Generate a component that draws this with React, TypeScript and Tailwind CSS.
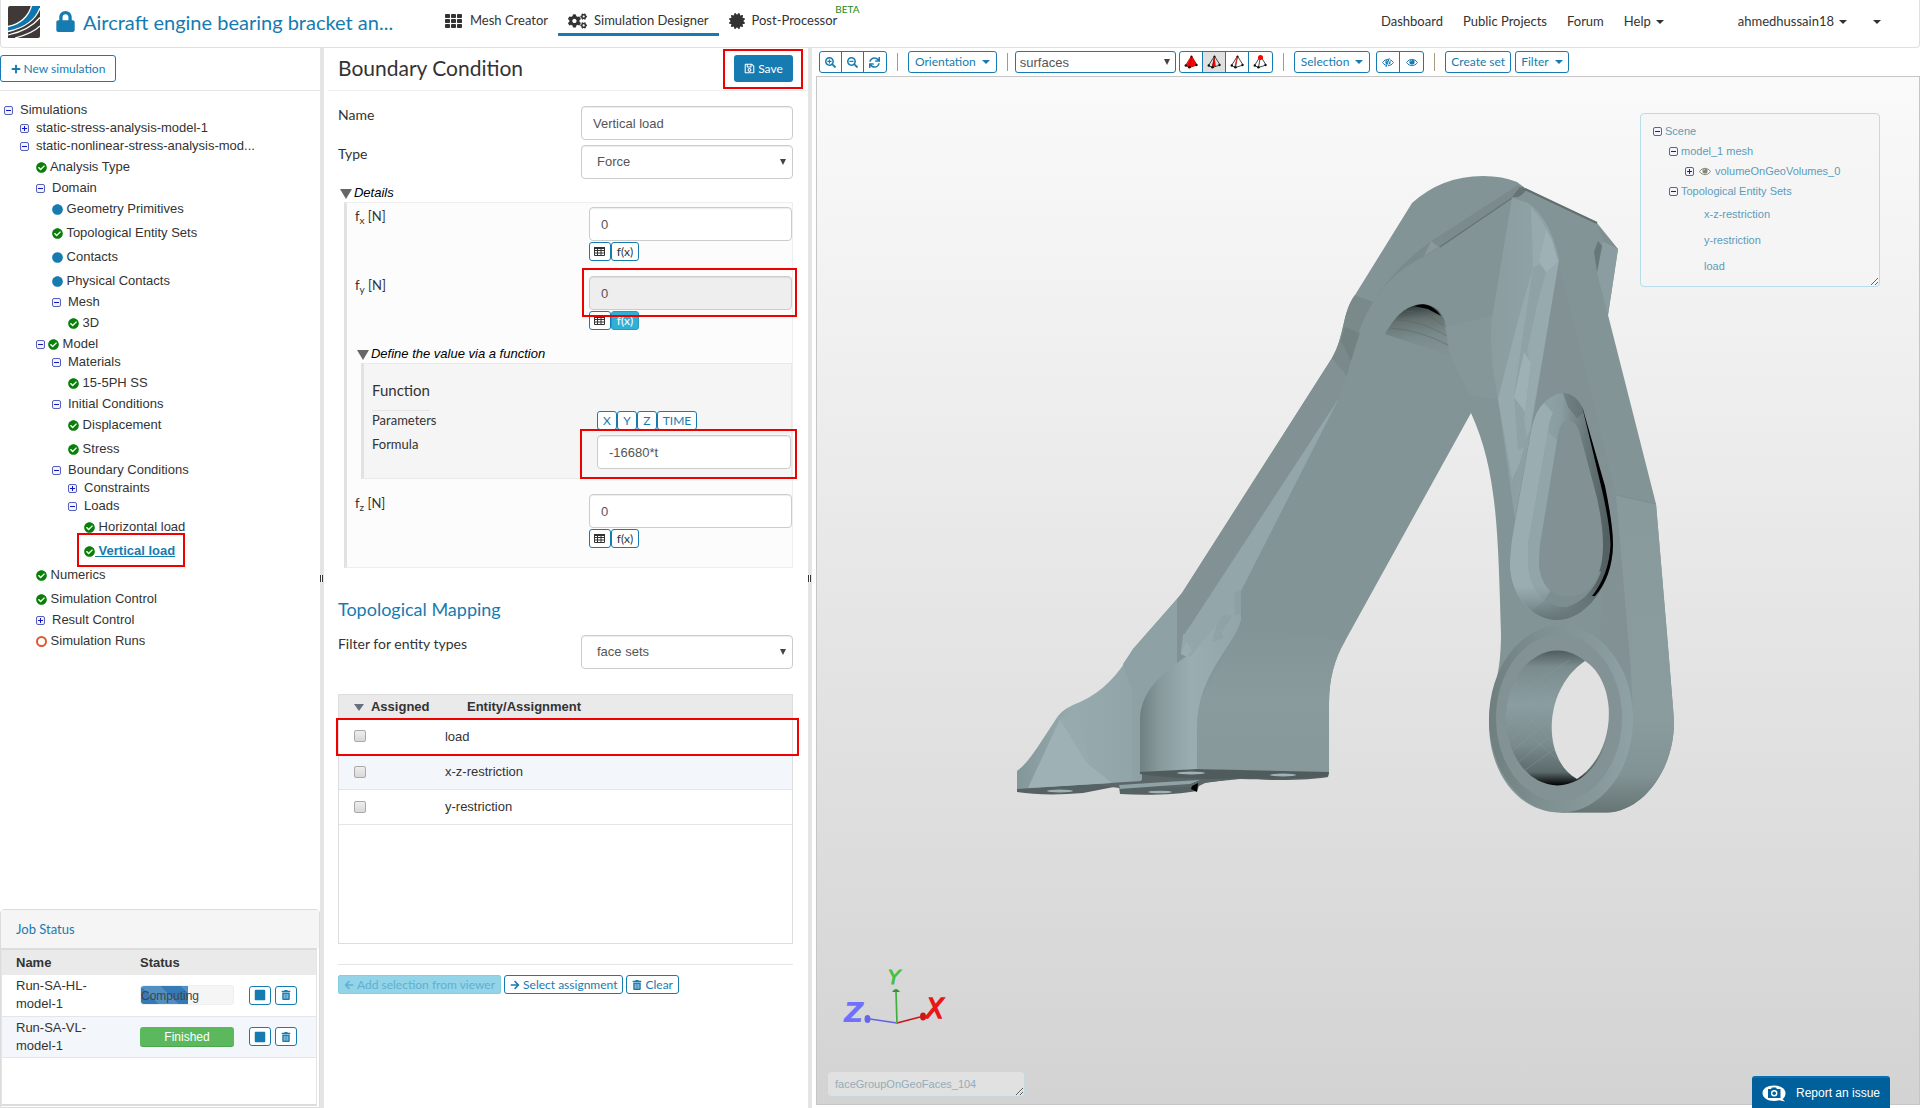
import React from "react";
import {
  FaLock,
  FaTh,
  FaCogs,
  FaCertificate,
  FaPlus,
  FaRegSave,
  FaSearchPlus,
  FaSearchMinus,
  FaSync,
  FaCheckCircle,
  FaCircle,
  FaTrashAlt,
  FaArrowLeft,
  FaArrowRight,
  FaSquare,
} from "react-icons/fa";

const sans = "font-['Liberation_Sans',Arial,sans-serif]";
const outline = "border border-[#167bb0] text-[#167bb0] bg-white rounded-[3px]";

function Mark({ className }: { className: string }) {
  return <span aria-hidden="true" className={"pointer-events-none absolute z-10 border-2 border-[#f00000] " + className} />;
}

function Caret() {
  return <span aria-hidden="true" className="inline-block border-x-4 border-t-4 border-x-transparent border-t-current" />;
}

function Logo() {
  return (
    <svg viewBox="0 0 32 32" className="h-8 w-8" aria-label="SimScale" role="img">
      <path d="M2 0H32V30a2 2 0 0 1-2 2H0V2a2 2 0 0 1 2-2z" fill="#3f3a37" />
      <path d="M23.500 0H32V1C28 13 17 21 0 25V20.500C12 18 20 11 23.500 0z" fill="#0b76b0" />
      <path d="M23.500 0C20 11 12 18 0 20.500" stroke="#fff" strokeWidth="1.300" fill="none" />
      <path d="M32 2C28 13 17 22 0 25.500" stroke="#fff" strokeWidth="1.300" fill="none" />
      <path d="M32 11.500C25 20 14 26 0 29" stroke="#fff" strokeWidth="1.200" fill="none" />
      <path d="M32 20C27 25 19 29 7 32" stroke="#fff" strokeWidth="1.200" fill="none" />
    </svg>
  );
}

function GridMark() {
  return (
    <svg viewBox="0 0 18 14" className="h-3.5 w-[18px]" fill="currentColor">
      {[0, 5, 10].map((y) =>
        [0, 6, 12].map((x) => <rect key={x + "-" + y} x={x} y={y} width="5" height="4" rx=".8" />)
      )}
    </svg>
  );
}

function NavTab({ icon, text, active }: { icon: React.ReactNode; text: string; active?: boolean }) {
  return (
    <a
      href="#"
      className={
        "flex h-9 items-center gap-[7px] border-b-[3px] px-2.5 pt-2 text-[13px] " +
        (active ? "border-[#167bb0]" : "border-transparent")
      }
    >
      {icon}
      <span>{text}</span>
    </a>
  );
}

function Header() {
  return (
    <header className="flex h-12 shrink-0 rounded-b border border-t-0 border-[#e0e0e0] text-[#333]">
      <a href="#" className="ml-[7px] mt-1.5"><Logo /></a>
      <a href="#" className="ml-4 flex h-[42px] w-[379px] items-center gap-2 text-[#167bb0]">
        <FaLock className="h-[21px] w-[19px]" />
        <span className="mt-0.5 text-[20px]">Aircraft engine bearing bracket an...</span>
      </a>
      <nav className="flex">
        <NavTab icon={<GridMark />} text="Mesh Creator" />
        <NavTab icon={<FaCogs className="h-[18px] w-[19px]" />} text="Simulation Designer" active />
        <NavTab icon={<FaCertificate className="h-4 w-4" />} text="Post-Processor" />
        <span className="-ml-3 mt-1 text-[10px] leading-[10px] text-[#1b8a1b]">BETA</span>
      </nav>
      <nav className="ml-auto flex h-[43px] items-center gap-5 pr-[38px] text-[13px]">
        <a href="#">Dashboard</a>
        <a href="#">Public Projects</a>
        <a href="#">Forum</a>
        <button className="flex items-center gap-[5px]">Help <Caret /></button>
        <button className="ml-[54px] flex items-center gap-[5px]">ahmedhussain18 <Caret /></button>
        <button className="ml-1.5 flex items-center" aria-label="More"><Caret /></button>
      </nav>
    </header>
  );
}

function Expander({ open }: { open: boolean }) {
  return (
    <button aria-label={open ? "Collapse" : "Expand"} className="h-[9px] w-[9px] shrink-0">
      <svg viewBox="0 0 9 9" className="block h-[9px] w-[9px]">
        <rect x=".5" y=".5" width="8" height="8" rx="1.500" fill="#f3f3fa" stroke="#5560b8" />
        <path d={open ? "M2 4.500h5" : "M2 4.500h5M4.500 2v5"} stroke="#1515c8" />
      </svg>
    </button>
  );
}

type Status = "check" | "dot" | "ring";
type Item = { text: string; level: number; open?: boolean; mark?: Status; active?: boolean };

const items: Item[] = [
  { text: "Simulations", level: 0, open: true },
  { text: "static-stress-analysis-model-1", level: 1, open: false },
  { text: "static-nonlinear-stress-analysis-mod...", level: 1, open: true },
  { text: "Analysis Type", level: 2, mark: "check" },
  { text: "Domain", level: 2, open: true },
  { text: "Geometry Primitives", level: 3, mark: "dot" },
  { text: "Topological Entity Sets", level: 3, mark: "check" },
  { text: "Contacts", level: 3, mark: "dot" },
  { text: "Physical Contacts", level: 3, mark: "dot" },
  { text: "Mesh", level: 3, open: true },
  { text: "3D", level: 4, mark: "check" },
  { text: "Model", level: 2, open: true, mark: "check" },
  { text: "Materials", level: 3, open: true },
  { text: "15-5PH SS", level: 4, mark: "check" },
  { text: "Initial Conditions", level: 3, open: true },
  { text: "Displacement", level: 4, mark: "check" },
  { text: "Stress", level: 4, mark: "check" },
  { text: "Boundary Conditions", level: 3, open: true },
  { text: "Constraints", level: 4, open: false },
  { text: "Loads", level: 4, open: true },
  { text: "Horizontal load", level: 5, mark: "check" },
  { text: "Vertical load", level: 5, mark: "check", active: true },
  { text: "Numerics", level: 2, mark: "check" },
  { text: "Simulation Control", level: 2, mark: "check" },
  { text: "Result Control", level: 2, open: false },
  { text: "Simulation Runs", level: 2, mark: "ring" },
];

const indents = ["pl-1", "pl-5", "pl-9", "pl-[52px]", "pl-[68px]", "pl-[84px]"];

function StatusMark({ kind }: { kind: Status }) {
  if (kind === "check") return <FaCheckCircle className="h-[11px] w-[11px] overflow-visible text-[#078007]" />;
  if (kind === "dot") return <FaCircle className="h-[11px] w-[11px] overflow-visible text-[#167bb0]" />;
  return <span className="h-[11px] w-[11px] rounded-full border-2 border-[#e2582a]" />;
}

function TreeRow({ item }: { item: Item }) {
  const leaf = item.open === undefined;
  return (
    <li className={"relative flex items-center " + (leaf ? "h-6 " : "h-[18px] ") + indents[item.level]}>
      {!leaf && <Expander open={!!item.open} />}
      {item.mark ? (
        <a href="#" className={"flex items-center " + (leaf ? "" : "ml-[3px]")}>
          <StatusMark kind={item.mark} />
          <span
            className={item.active ? "whitespace-pre font-bold text-[#167bb0] underline" : "whitespace-pre"}
          >{" " + item.text}</span>
        </a>
      ) : (
        <a href="#" className="ml-[7px]">{item.text}</a>
      )}
      {item.active && <Mark className="-top-1.5 left-[77px] h-[34px] w-[108px]" />}
    </li>
  );
}

function IconButton({ label, children }: { label: string; children: React.ReactNode }) {
  return (
    <button aria-label={label} className={"flex h-[19px] w-[22px] items-center justify-center " + outline}>{children}</button>
  );
}

function JobRow({ name, children, tint }: { name: string; children: React.ReactNode; tint?: boolean }) {
  return (
    <tr className={"h-[41px] border-b border-[#e2e5e9] leading-[18px] " + (tint ? "bg-[#f3f6fb]" : "")}>
      <td className="w-[138px] pr-12 pl-3.5">{name}</td>
      <td className="w-[94px] text-[12px]">{children}</td>
      <td>
        <div className="flex gap-1 pl-[15px]">
          <IconButton label="Stop"><FaSquare className="h-3 w-3" /></IconButton>
          <IconButton label="Delete"><FaTrashAlt className="h-2.5 w-2.5" /></IconButton>
        </div>
      </td>
    </tr>
  );
}

function Sidebar() {
  return (
    <aside className={"flex w-1/6 shrink-0 flex-col text-[13px] text-[#333] " + sans}>
      <div className="h-[43px] border-b border-[#e5e5e5] pt-[7px]">
        <button className={"flex h-[27px] w-[116px] items-center justify-center gap-[3px] font-['Lato',sans-serif] text-[12px] " + outline}>
          <FaPlus className="h-2.5 w-2.5" />New simulation
        </button>
      </div>
      <ul className="flex-1 pt-2.5">
        {items.map((it) => <TreeRow key={it.text} item={it} />)}
      </ul>
      <section className="h-[199px] rounded-t border border-[#dcdcdc]">
        <h2 className="h-[38px] bg-[#f5f5f5] pl-[15px] font-['Lato',sans-serif] text-[13px] leading-[38px] text-[#167bb0]">Job Status</h2>
        <div className="mr-0.5 h-[158px] border-2 border-[#dcdcdc] border-r-[#e5e5e5] border-l-[#e5e5e5] border-x">
          <table className="w-full border-collapse text-left">
            <thead>
              <tr className="h-[25px] bg-[#eaeaea]">
                <th className="pl-3.5">Name</th>
                <th>Status</th>
                <th aria-label="Actions" />
              </tr>
            </thead>
            <tbody>
              <JobRow name="Run-SA-HL-model-1">
                <div className="relative h-5 w-[94px] rounded-[3px] border border-[#eee] bg-[#f5f5f5] pl-0.5 leading-[20px] text-[#444]">
                  <span className="absolute inset-y-0 left-0 w-[47px] rounded-l-[3px] bg-[#337ab7] bg-[linear-gradient(45deg,#ffffff26_25%,transparent_25%,transparent_50%,#ffffff26_50%,#ffffff26_75%,transparent_75%)] bg-[length:40px_40px]" />
                  <span className="relative -ml-0.5">Computing</span>
                </div>
              </JobRow>
              <JobRow name="Run-SA-VL-model-1" tint>
                <div className="h-5 w-[94px] rounded-[3px] border-b border-[#4da54d] bg-[#5cb85c] text-center leading-[20px] text-white">Finished</div>
              </JobRow>
            </tbody>
          </table>
        </div>
      </section>
    </aside>
  );
}

function Splitter() {
  return (
    <div className="flex w-1 shrink-0 items-center justify-center bg-[#e5e5e5]">
      <span className="h-[7px] w-[3px] border-x border-[#333] bg-white" />
    </div>
  );
}

const box = "h-[34px] w-full rounded border border-[#ccc] text-[13px] text-[#555] shadow-[inset_0_1px_1px_rgba(0,0,0,0.075)] " + sans;

function Select({ id, value }: { id: string; value: string }) {
  return (
    <span className="relative block w-[212px]">
      <select id={id} defaultValue={value} className={"appearance-none bg-white px-[15px] " + box}>
        <option>{value}</option>
      </select>
      <span aria-hidden="true" className="pointer-events-none absolute top-3.5 right-[7px] h-0 w-0 border-x-[3px] border-t-[6px] border-x-transparent border-t-[#444]" />
    </span>
  );
}

function GridIcon() {
  return (
    <svg viewBox="0 0 11 9" className="h-[9px] w-[11px]">
      <path d="M.5 1h10M.5 3.500h10M.5 6h10M.5 8.500h10M.5 1v7.500M3.500 1v7.500M7 1v7.500M10.500 1v7.500" stroke="#333" fill="none" />
      <path d="M0 0h11v2H0z" fill="#333" />
    </svg>
  );
}

function Component({ axis, fn }: { axis: string; fn?: boolean }) {
  const id = "f" + axis;
  return (
    <div className="flex h-[69px] items-start justify-between pt-1">
      <label htmlFor={id} className="pl-2 leading-[18px]">
        f<sub className="text-[10px]">{axis}</sub> [N]
      </label>
      <div className="relative w-[203px]">
        <input id={id} defaultValue="0" readOnly={fn} className={"px-[11px] " + box + (fn ? " bg-[#eee]" : " bg-white")} />
        <div className="mt-px flex">
          <IconButton label={"Table for f" + axis}><GridIcon /></IconButton>
          <button
            className={
              "h-[19px] w-7 rounded-[3px] border text-[12px] leading-[16px] " +
              (fn ? "border-[#269abc] bg-[#31b0d5] text-white" : "border-[#167bb0] bg-white text-[#333]")
            }
          >f(x)</button>
        </div>
        {fn && <Mark className="-top-2 -left-[7px] h-[49px] w-[215px]" />}
      </div>
    </div>
  );
}

function Legend({ text }: { text: string }) {
  return (
    <button className={"flex h-[19px] items-center gap-0.5 text-[13px] text-black italic " + sans}>
      <span aria-hidden="true" className="mt-0.5 border-x-[6px] border-t-[10px] border-x-transparent border-t-[#666]" />
      {text}
    </button>
  );
}

function Panel() {
  return (
    <main className="w-[484px] shrink-0 pb-8 text-[14px] text-[#333]">
      <div className="ml-1 flex h-[43px] items-start justify-between border-b border-[#eee] pr-[15px] pl-2.5">
        <h1 className="text-[21px] leading-[40px]">Boundary Condition</h1>
        <div className="relative mt-[7px]">
          <button className="flex h-[27px] w-[59px] items-center justify-center gap-[3px] rounded-[3px] bg-[#167bb0] text-[12px] text-white">
            <FaRegSave className="h-[11px] w-[11px]" />Save
          </button>
          <Mark className="-top-1.5 -left-[11px] h-10 w-20" />
        </div>
      </div>
      <form className="pr-[15px] pl-3.5" onSubmit={(e) => e.preventDefault()}>
        <div className="mt-[15px] flex h-[39px] justify-between">
          <label htmlFor="name" className="leading-[18px]">Name</label>
          <div className="w-[212px]">
            <input id="name" defaultValue="Vertical load" className={"bg-white px-[11px] " + box} />
          </div>
        </div>
        <div className="flex h-[38px] justify-between">
          <label htmlFor="type" className="leading-[18px]">Type</label>
          <Select id="type" value="Force" />
        </div>
        <div className="pl-0.5"><Legend text="Details" /></div>
        <fieldset className="ml-1.5 min-w-0 border border-l-[3px] border-[#eee] border-l-[#e2e2e2] bg-[#fcfcfc] pb-2 text-[13px]">
          <Component axis="x" />
          <Component axis="y" fn />
          <div className="mt-[3px] pl-2.5"><Legend text="Define the value via a function" /></div>
          <fieldset className="mb-[11px] ml-3.5 h-[116px] min-w-0 border border-l-[3px] border-[#eaeaea] border-l-[#e2e2e2] bg-[#f5f5f5] pl-2">
            <h2 className="block h-[47px] w-fit border-b border-[#e5e5e5] pt-4 text-[15px] leading-5">Function</h2>
            <div className="flex h-6 justify-between">
              <span className="leading-[18px]">Parameters</span>
              <span className="flex w-[194px]">
                {["X", "Y", "Z"].map((p) => (
                  <button key={p} className={"h-[19px] w-5 text-[12px] leading-[16px] " + outline}>{p}</button>
                ))}
                <button className={"h-[19px] w-10 text-[12px] leading-[16px] " + outline}>TIME</button>
              </span>
            </div>
            <div className="flex justify-between">
              <label htmlFor="formula" className="leading-[18px]">Formula</label>
              <div className="relative w-[194px]">
                <input id="formula" defaultValue="-16680*t" className={"bg-white px-[11px] " + box} />
                <Mark className="-top-1.5 -left-[17px] h-[50px] w-[217px]" />
              </div>
            </div>
          </fieldset>
          <Component axis="z" />
        </fieldset>
        <h2 className="mt-7 text-[18px] leading-[26px] text-[#167bb0]">Topological Mapping</h2>
        <div className="mt-[13px] flex justify-between">
          <label htmlFor="filter" className="leading-[18px]">Filter for entity types</label>
          <Select id="filter" value="face sets" />
        </div>
        <div className={"relative mt-[25px] h-[250px] border border-[#ddd] text-[13px] " + sans}>
          <table className="w-full border-collapse text-left">
            <thead>
              <tr className="h-6 bg-[#eaeaea]">
                <th className="w-[106px] pl-[15px]">
                  <span className="flex items-center gap-[7px]">
                    <span aria-hidden="true" className="border-x-[5px] border-t-[7px] border-x-transparent border-t-[#667080]" />
                    Assigned
                  </span>
                </th>
                <th className="pl-[22px]">Entity/Assignment</th>
              </tr>
            </thead>
            <tbody>
              {["load", "x-z-restriction", "y-restriction"].map((n) => (
                <tr key={n} className="h-[35px] border-b border-[#e5e5e5] even:bg-[#f3f6fb]">
                  <td className="pl-[15px]">
                    <input id={n} type="checkbox" className="block h-3 w-3 appearance-none rounded-[2px] border border-[#aaa] bg-linear-to-b from-[#eee] to-[#d8d8d8]" />
                  </td>
                  <td><label htmlFor={n}>{n}</label></td>
                </tr>
              ))}
            </tbody>
          </table>
          <Mark className="top-[23px] -right-[7px] -left-[3px] h-[38px]" />
        </div>
        <div className="mt-5 flex gap-[3px] border-t border-[#e5e5e5] pt-2.5 text-[12px]">
          <button disabled className="flex h-[19px] items-center gap-[3px] rounded-[2px] border border-[#86cfe3] bg-[#93d4e8] px-[5px] text-[#5fb0d2]">
            <FaArrowLeft className="h-2.5 w-2.5" />Add selection from viewer
          </button>
          <button className={"flex h-[19px] items-center gap-[3px] px-[5px] " + outline}>
            <FaArrowRight className="h-2.5 w-2.5" />Select assignment
          </button>
          <button className={"flex h-[19px] items-center gap-[3px] px-[5px] " + outline}>
            <FaTrashAlt className="h-2.5 w-2.5" />Clear
          </button>
        </div>
      </form>
    </main>
  );
}

function Eye({ off, gray }: { off?: boolean; gray?: boolean }) {
  return (
    <svg viewBox="0 0 12 9" className={gray ? "h-[9px] w-3 text-[#858578]" : "h-[9px] w-3"}>
      <path d="M.6 4.500C3.200 0.300 8.800 0.300 11.400 4.500C8.800 8.700 3.200 8.700 .6 4.500z" fill="#fff" stroke="currentColor" />
      <circle cx="6" cy="4" r="2.600" fill="currentColor" />
      <path d="M4.600 3.500a1.500 1.500 0 0 1 1.200-1.100" stroke="#fff" strokeWidth=".7" fill="none" />
      {off && <path d="M8 .2L4.600 9" stroke="#fff" strokeWidth="1.600" />}
      {off && <path d="M7.400 .2L4 9" stroke="currentColor" />}
    </svg>
  );
}

function Tetra({ kind }: { kind: "solid" | "face" | "edge" | "node" }) {
  return (
    <svg viewBox="0 0 14 14" className="h-3.5 w-3.5">
      {kind === "solid" && <path d="M7.500 1L13 10L5.500 12.500L2 10.500z" fill="#f00" />}
      {kind === "face" && <path d="M7.500 1L8.800 11.500L4.500 12.500z" fill="#f00" />}
      <path d="M7.500 1L13 10L5.500 12.500L1.500 10.500zM7.500 1L5.500 12.500" fill="none" stroke={kind === "solid" ? "#b00" : "#333"} strokeWidth=".9" />
      {kind === "edge" && <path d="M7.500 1L5 11.500" stroke="#f22" strokeWidth="1.100" />}
      <circle cx="1.800" cy="10.500" r="1.200" fill="#111" />
      <circle cx="5.400" cy="12.300" r="1.300" fill="#111" />
      <circle cx="12.500" cy="10" r="1.200" fill="#111" />
      <circle cx="7.500" cy={kind === "node" ? "2.500" : "1.500"} r={kind === "node" ? "2.500" : "1"} fill={kind === "node" ? "#f00" : "#111"} />
    </svg>
  );
}

function Group({ children }: { children: React.ReactNode }) {
  return <div className="flex h-[22px] divide-x divide-[#167bb0] overflow-hidden rounded-[3px] border border-[#167bb0] text-[#167bb0]">{children}</div>;
}

function Tool({ label, children, wide, on }: { label: string; children: React.ReactNode; wide?: boolean; on?: boolean }) {
  return (
    <button aria-label={label} className={"flex items-center justify-center " + (wide ? "w-[23px] " : "w-[22px] ") + (on ? "bg-[#e0e0e0]" : "")}>{children}</button>
  );
}

function Bar() {
  return <span aria-hidden="true" className="mx-2.5 h-[18px] w-px bg-[#a89a80]" />;
}

const textTool = "flex h-[22px] items-center text-[12px] whitespace-nowrap " + outline;

function Toolbar() {
  return (
    <div className="flex h-7 items-center pl-[7px]">
      <Group>
        <Tool label="Zoom in"><FaSearchPlus className="h-[11px] w-[11px]" /></Tool>
        <Tool label="Zoom out"><FaSearchMinus className="h-[11px] w-[11px]" /></Tool>
        <Tool label="Reset view"><FaSync className="h-[11px] w-[11px]" /></Tool>
      </Group>
      <Bar />
      <button className={"gap-1.5 px-1.5 " + textTool}>Orientation <Caret /></button>
      <Bar />
      <span className="relative mr-[3px] -ml-[3px] w-[161px]">
        <select aria-label="Render mode" defaultValue="surfaces" className={"block h-[22px] w-full appearance-none rounded-[3px] border border-[#167bb0] bg-white px-1 text-[13px] leading-none text-[#555] " + sans}>
          <option>surfaces</option>
        </select>
        <span aria-hidden="true" className="pointer-events-none absolute top-2 right-1.5 h-0 w-0 border-x-[3px] border-t-[6px] border-x-transparent border-t-[#444]" />
      </span>
      <Group>
        <Tool label="Pick volumes" wide><Tetra kind="solid" /></Tool>
        <Tool label="Pick faces" wide on><Tetra kind="face" /></Tool>
        <Tool label="Pick edges" wide><Tetra kind="edge" /></Tool>
        <Tool label="Pick nodes" wide><Tetra kind="node" /></Tool>
      </Group>
      <Bar />
      <button className={"mr-1.5 gap-1.5 px-1.5 " + textTool}>Selection <Caret /></button>
      <Group>
        <Tool label="Hide selection" wide><Eye off /></Tool>
        <Tool label="Show selection" wide><Eye /></Tool>
      </Group>
      <Bar />
      <button className={"mr-1 px-[5px] " + textTool}>Create set</button>
      <button className={"gap-1.5 px-[5px] " + textTool}>Filter <Caret /></button>
    </div>
  );
}

function Bracket() {
  return (
    <svg viewBox="817 77 1102 1027" className="absolute inset-0 h-full w-full" role="img" aria-label="Bearing bracket model">
      <defs>
        <linearGradient id="foot" x1="0" x2="1"><stop offset="0" stopColor="#6f8081" /><stop offset=".2" stopColor="#889a9c" /><stop offset=".5" stopColor="#9aadb1" /><stop offset="1" stopColor="#92a5a8" /></linearGradient>
        <linearGradient id="back" x1="0" x2="1"><stop offset="0" stopColor="#83979a" /><stop offset=".35" stopColor="#97aaae" /><stop offset=".75" stopColor="#91a4a7" /><stop offset="1" stopColor="#8b9d9f" /></linearGradient>
        <linearGradient id="front" x1="0" x2="0" y1="0" y2="1"><stop offset="0" stopColor="#839496" /><stop offset=".5" stopColor="#899b9d" /><stop offset="1" stopColor="#87989b" /></linearGradient>
        <linearGradient id="arch" x1="0" x2=".15" y1="0" y2="1"><stop offset="0" stopColor="#000" /><stop offset=".15" stopColor="#3d4848" /><stop offset=".35" stopColor="#65716f" /><stop offset=".7" stopColor="#7a8b8c" /><stop offset="1" stopColor="#829294" /></linearGradient>
        <linearGradient id="rib" x1="0" x2="1"><stop offset="0" stopColor="#8b9d9f" /><stop offset="1" stopColor="#91a4a7" /></linearGradient>
        <linearGradient id="pocket" x1="0" x2="1" y1="0" y2=".15"><stop offset="0" stopColor="#9bafb3" /><stop offset=".5" stopColor="#899c9f" /><stop offset=".75" stopColor="#68777a" /><stop offset="1" stopColor="#546162" /></linearGradient>
        <linearGradient id="pocketLow" x1="0" x2="0" y1="0" y2="1"><stop offset=".85" stopColor="#74858700" /><stop offset="1" stopColor="#657476" /></linearGradient>
        <linearGradient id="bore" x1="0" x2="0" y1="0" y2="1"><stop offset="0" stopColor="#4f5c5d" /><stop offset=".12" stopColor="#7b8c8e" /><stop offset=".4" stopColor="#8a9da0" /><stop offset=".7" stopColor="#7a8b8d" /><stop offset=".9" stopColor="#5c6a6b" /><stop offset="1" stopColor="#000" /></linearGradient>
        <linearGradient id="side" x1="0" x2="0" y1="0" y2="1"><stop offset="0" stopColor="#899a9c" /><stop offset=".7" stopColor="#8a9c9e" /><stop offset=".88" stopColor="#829395" /><stop offset="1" stopColor="#667474" /></linearGradient>
        <linearGradient id="boss" x1="0" x2="1"><stop offset="0" stopColor="#6f7f80" /><stop offset=".35" stopColor="#7e8f90" /><stop offset=".75" stopColor="#87999b" /><stop offset="1" stopColor="#8fa2a5" /></linearGradient>
      </defs>

      <path fill="#556162" d="M1017 787L1119 782L1197 780L1240 776L1329 772L1328 777C1310 780 1283 781 1240 779L1200 783L1197 791C1180 794 1150 796 1120 794L1119 786L1083 793C1060 795 1035 795 1017 792z" />
      <path fill="#5a6667" d="M1090 784L1140 772H1245L1232 779L1205 783L1197 787L1119 788z" />
      <path fill="#000" d="M1192 786L1198 783L1197 792L1191 789z" />
      <path fill="#8fa2a5" d="M1119 785L1165 782L1200 780L1190 784L1160 786L1120 789z" />
      <path fill="url(#back)" d="M1017 771C1024 766 1030 758 1037 748L1058 716Q1064 708 1080 702Q1112 688 1133 649L1177 599V665L1141 700V781L1017 789z" />
      <path fill="#9eb1b5" d="M1028 788L1060 719L1087 763L1112 783z" />
      <path fill="#97aaae" d="M1060 719L1078 712L1090 765L1087 763z" />
      <path fill="#8ea1a4" d="M1123 664L1133 649L1177 599V665L1142 710V780H1132V690z" />

      <path fill="#839496" d="M1177 599L1182 593L1332 358C1345 336 1342 312 1355 295L1412 203Q1442 176 1483 176Q1503 176 1517 182L1525 188L1597 223L1603 235L1618 249L1608 315L1656 504L1667 634L1674 720C1675 770 1642 812 1607 812.500H1560C1516 812 1489 770 1489 724C1489 694 1501 684 1501 634C1498 530 1497 470 1471 413L1345 641Q1329 668 1329 703V773L1197 769L1177 667z" />
      <path fill="#829193" d="M1177 599L1182 593L1332 358L1347 372L1339 398L1185 635L1181 655L1187 657L1177 667z" />
      <path fill="url(#front)" d="M1197 769V728C1197 690 1220 663 1241 625L1345 641Q1329 668 1329 703V773z" />
      <path fill="url(#foot)" d="M1183 635L1241 591V620C1235 645 1197 675 1197 728V769L1140 773V720C1140 696 1156 676 1187 656L1181 654z" />
      <path fill="#93a6aa" d="M1339 398L1190 626Q1182 634 1181 654L1190 657L1217 624L1241 591z" />
      <path fill="#9aacb0" d="M1181 654L1186 642L1192 650L1187 657z" />
      <g fill="#869a9d" opacity=".4">
        <path d="M1217 624l5 8 10-16-8-2zM1217 624l-5 18 12-4zM1234 593l7-3v24l-6 2z" />
      </g>
      <path fill="#4f5b5c" d="M1140 772L1197 769L1329 772L1328 776Q1300 779 1240 778Q1190 781 1140 774z" />
      <g fill="#a0b2b5">
        <ellipse cx="1191" cy="773" rx="14" ry="1.500" /><ellipse cx="1283" cy="775" rx="13" ry="1.500" />
        <ellipse cx="1060" cy="791" rx="13" ry="1.500" /><ellipse cx="1160" cy="792" rx="12" ry="1.300" />
      </g>

      <path fill="#7a8a8b" d="M1355 295L1373 302Q1359 326 1355 345L1347 376L1332 358C1345 336 1342 312 1355 295z" />
      <path fill="#6d7c7c" d="M1345 327L1360 333L1351 361L1341 341z" opacity=".6" />
      <path fill="#7b8a8c" d="M1373 302Q1392 270 1430 242L1518 185L1526 190Q1522 197 1512 197L1440 247L1427 255Q1392 271 1373 302z" />
      <path fill="#8a999b" d="M1424 256L1431 241L1439 247z" />
      <path d="M1440 247L1512 198M1522 187L1526 190" stroke="#667272" strokeWidth="1.200" fill="none" />
      <path d="M1525 189L1597 223" stroke="#626e6f" strokeWidth="2" />
      <path fill="#5d6968" d="M1512 197Q1520 199 1526 190L1520 187z" opacity=".7" />

      <path fill="url(#arch)" d="M1388 329Q1402 305 1423 304Q1440 306 1445 322L1450 356L1385 334z" />
      <path fill="#000" d="M1414 306Q1424 303 1430 306Q1437 310 1441 316L1428 309z" />
      <path d="M1403 311Q1425 311 1443 325M1396 320Q1420 320 1447 336M1390 328Q1420 330 1448 345" stroke="#566363" strokeWidth="1" fill="none" opacity=".5" />
      <path fill="#879a9c" d="M1445 327L1493 315L1491 345L1498 400L1470 395L1450 356z" opacity=".5" />

      <path fill="url(#rib)" d="M1512 198L1528 203Q1550 218 1559 260L1543 357L1528 446L1515 519L1498 399Q1488 350 1492 318z" />
      <path fill="#97aaad" d="M1531 207Q1540 217 1546 229L1539 262L1559 260L1541 365L1530 430L1527 436L1520 462L1512 480L1498 399L1518 320L1533 268z" />
      <path fill="#8fa2a5" d="M1533 268L1539 264L1546 272L1537 305L1527 352L1531 365L1524 418L1528 446L1518 450L1514 395z" />
      <path fill="#9eb1b5" d="M1546 229L1552 240L1558 262L1546 272L1539 261zM1524 352L1531 363L1525 412L1514 397z" />
      <path fill="#829193" d="M1559 262L1616 496L1632 682L1600 640L1606 489L1584 412L1563 393L1533 420z" opacity=".6" />

      <path fill="#8b9da0" d="M1603 241L1618 249L1608 315L1597 273z" />
      <path fill="#68787a" d="M1598 241L1602 246L1597 272L1594 252z" />
      <path fill="#7f9092" d="M1597 223L1618 249L1603 241z" />
      <path fill="url(#side)" d="M1616 495L1656 504L1667 634L1674 720C1675 770 1642 812 1607 812.500H1560Q1620 800 1633 719L1631 670z" />
      <path d="M1616 495L1656 504" stroke="#7e8f91" />

      <path fill="url(#pocket)" d="M1563 393Q1578 394 1584 412L1605 489Q1613 525 1613 545C1613 585 1585 620 1557 620C1528 620 1510 590 1510 562L1512 540L1532 427Q1540 396 1563 393z" />
      <path fill="#9aadb1" d="M1532 427Q1536 410 1544 403L1553 413Q1549 420 1548 432L1528 544V565Q1530 588 1545 600L1532 611Q1510 594 1510 562L1512 540z" />
      <path fill="#92a5a8" d="M1548 432L1557 440L1540 545L1539 562Q1540 580 1551 590L1545 600Q1528 586 1528 562V544z" />
      <path fill="url(#pocketLow)" d="M1563 393Q1578 394 1584 412L1605 489Q1613 525 1613 545C1613 585 1585 620 1557 620C1528 620 1510 590 1510 562L1512 540L1532 427Q1540 396 1563 393z" />
      <path fill="#7d8e90" d="M1545 600Q1555 608 1567 607Q1590 600 1601 572L1597 570Q1590 597 1567 597Q1557 596 1551 590z" />
      <path fill="#5b696a" d="M1563 393Q1578 394 1584 412L1577 418L1568 407z" opacity=".5" />
      <path fill="#829193" d="M1567 420Q1577 421 1580 434L1597 498Q1603 525 1603 545C1603 575 1592 597 1567 597C1549 597 1539 580 1539 562L1540 545L1557 442Q1559 422 1567 420z" />
      <path fill="#000" d="M1582 406L1605 486Q1613 525 1613 545Q1612 577 1595 596L1592 596Q1609 575 1610.500 545Q1610 525 1602 490z" />

      <ellipse cx="1561" cy="719" rx="72" ry="93.500" fill="url(#boss)" />
      <ellipse cx="1559" cy="718" rx="63" ry="83" fill="#839395" />
      <ellipse cx="1557.500" cy="718" rx="51.500" ry="67.500" fill="url(#bore)" />
      <g stroke="#8c9ea0" strokeWidth=".8" opacity=".5" fill="none">
        <path d="M1508 700L1570 660M1506 714L1560 676M1506 728L1555 690M1508 742L1552 704M1511 752L1550 720M1516 764L1552 735M1522 772L1556 748" />
        <path d="M1514 682L1560 728M1508 696L1556 746M1507 715L1565 766" />
      </g>
      <path fill="#e1e1e1" d="M1585 661C1618 682 1618 752 1577 779C1542 760 1542 690 1585 661z" />

      <g strokeWidth="1.700" fill="none">
        <path d="M897 1023L870 1019" stroke="#6262e8" /><path d="M897 1023L920 1017" stroke="#c81818" /><path d="M897 1024L896 992" stroke="#3fae3f" />
      </g>
      <ellipse cx="867.500" cy="1019" rx="3" ry="4" fill="#6666e8" />
      <ellipse cx="923" cy="1016.500" rx="3" ry="4" fill="#c81818" />
      <path d="M892 992Q896 986 900 992z" fill="#3b8f3b" />
      <g fontFamily="DejaVu Sans, sans-serif" fontStyle="italic">
        <text x="888" y="984" fontSize="20" fill="#3fc03f" stroke="#3fc03f" strokeWidth=".8">Y</text>
        <text x="926" y="1018" fontSize="26" fill="#e81616" stroke="#e81616" strokeWidth="1.500">X</text>
        <text x="844" y="1022" fontSize="27" fontWeight="bold" fill="#7070ff">Z</text>
      </g>
    </svg>
  );
}

function SceneRow({ text, className, open, eye }: { text: string; className: string; open?: boolean; eye?: boolean }) {
  return (
    <li className={"flex items-center gap-[3px] " + className}>
      {open !== undefined && <Expander open={open} />}
      {eye && <span className="mr-px ml-0.5 flex"><Eye gray /></span>}
      <a href="#">{text}</a>
    </li>
  );
}

function Viewer() {
  return (
    <section className="flex min-w-0 flex-1 flex-col">
      <Toolbar />
      <div className="relative mb-[3px] ml-1 flex-1 overflow-hidden border border-[#c6c6c6] bg-linear-to-b from-[#fafafa] to-[#d3d3d3]">
        <Bracket />
        <ul className={"absolute top-9 right-[39px] h-[174px] w-60 resize overflow-hidden rounded border border-[#b8dcea] bg-[#f5f5f5]/70 pt-2 pl-3 text-[11px] text-[#5c9cba] " + sans}>
          <SceneRow text="Scene" className="h-[19px]" open />
          <SceneRow text="model_1 mesh" className="h-5 pl-4" open />
          <SceneRow text="volumeOnGeoVolumes_0" className="h-5 pl-8" open={false} eye />
          <SceneRow text="Topological Entity Sets" className="h-5 pl-4" open />
          <SceneRow text="x-z-restriction" className="h-[26px] pl-[51px]" />
          <SceneRow text="y-restriction" className="h-[26px] pl-[51px]" />
          <SceneRow text="load" className="h-[26px] pl-[51px]" />
        </ul>
        <textarea
          aria-label="Hovered entity"
          readOnly
          defaultValue="faceGroupOnGeoFaces_104"
          className={"absolute bottom-[7px] left-2.5 h-[26px] w-[198px] overflow-hidden rounded border border-[#c5d8e0] bg-white/30 px-[7px] py-1 text-[11px] leading-4 text-[#94adba] " + sans}
        />
      </div>
    </section>
  );
}

export default function App() {
  return (
    <div className="relative flex min-h-screen flex-col bg-white font-['Lato',sans-serif]">
      <Header />
      <div className="flex flex-1">
        <Sidebar />
        <Splitter />
        <Panel />
        <Splitter />
        <Viewer />
      </div>
      <button className={"absolute right-[30px] bottom-0 flex h-8 w-[138px] items-center gap-2.5 rounded-t-[3px] border-t-2 border-[#0b70b2] bg-[#00609c] pl-2.5 text-[12px] text-white " + sans}>
        <svg viewBox="0 0 24 17" className="h-[17px] w-6">
          <path d="M12 .5C18.500 .5 23.500 3.500 23.500 8Q23.500 12 20.500 14L23 16.500L17 15.300Q15 16 12 16C5.500 16 .5 12.500 .5 8S5.500 .5 12 .5z" fill="#fff" />
          <path d="M6 4h3l1-1.500h4L15 4h3.500v9H6z" fill="#00609c" />
          <circle cx="12.200" cy="8.300" r="3.200" fill="#fff" /><circle cx="12.200" cy="8.300" r="1.800" fill="#00609c" />
        </svg>
        <span>Report an issue</span>
      </button>
    </div>
  );
}
